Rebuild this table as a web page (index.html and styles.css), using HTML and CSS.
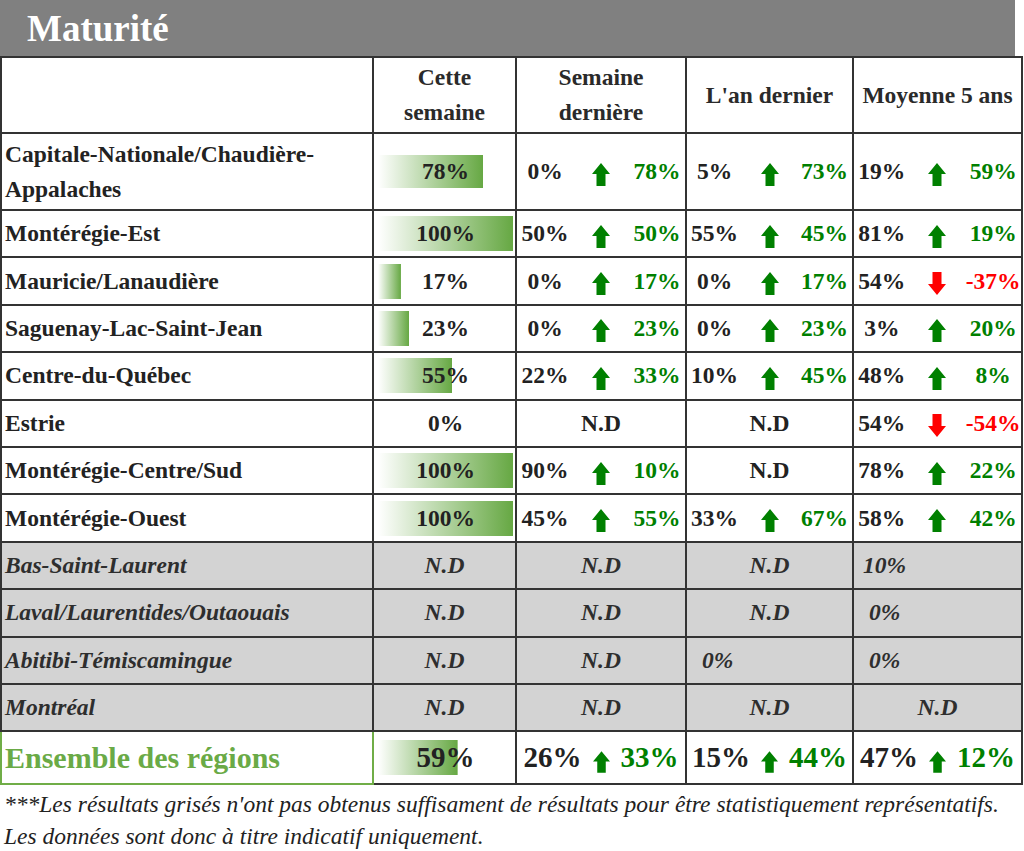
FILE: index.html
```html
<!DOCTYPE html>
<html lang="fr">
<head>
<meta charset="utf-8">
<title>Maturité</title>
<link rel="stylesheet" href="styles.css">
</head>
<body>
<div class="title">Maturité</div>
<table class="grid">
  <colgroup>
    <col class="c-label"><col class="c-week"><col class="c-last"><col class="c-year"><col class="c-avg">
  </colgroup>
  <tr class="head">
    <td></td>
    <td>Cette<br>semaine</td>
    <td>Semaine<br>dernière</td>
    <td>L'an dernier</td>
    <td>Moyenne 5 ans</td>
  </tr>
  <tr class="first">
    <td class="label">Capitale-Nationale/Chaudière-Appalaches</td>
    <td class="barcell"><div class="bar short" style="--w:78%">78%</div></td>
    <td><div class="cmp"><span>0%</span><svg class="arrow up" viewBox="0 0 18 23"><polygon points="9,0 18,11 13.5,11 13.5,23 4.5,23 4.5,11 0,11"/></svg><span class="pos">78%</span></div></td>
    <td><div class="cmp"><span>5%</span><svg class="arrow up" viewBox="0 0 18 23"><polygon points="9,0 18,11 13.5,11 13.5,23 4.5,23 4.5,11 0,11"/></svg><span class="pos">73%</span></div></td>
    <td><div class="cmp"><span>19%</span><svg class="arrow up" viewBox="0 0 18 23"><polygon points="9,0 18,11 13.5,11 13.5,23 4.5,23 4.5,11 0,11"/></svg><span class="pos">59%</span></div></td>
  </tr>
  <tr>
    <td class="label">Montérégie-Est</td>
    <td class="barcell"><div class="bar" style="--w:100%">100%</div></td>
    <td><div class="cmp"><span>50%</span><svg class="arrow up" viewBox="0 0 18 23"><polygon points="9,0 18,11 13.5,11 13.5,23 4.5,23 4.5,11 0,11"/></svg><span class="pos">50%</span></div></td>
    <td><div class="cmp"><span>55%</span><svg class="arrow up" viewBox="0 0 18 23"><polygon points="9,0 18,11 13.5,11 13.5,23 4.5,23 4.5,11 0,11"/></svg><span class="pos">45%</span></div></td>
    <td><div class="cmp"><span>81%</span><svg class="arrow up" viewBox="0 0 18 23"><polygon points="9,0 18,11 13.5,11 13.5,23 4.5,23 4.5,11 0,11"/></svg><span class="pos">19%</span></div></td>
  </tr>
  <tr>
    <td class="label">Mauricie/Lanaudière</td>
    <td class="barcell"><div class="bar" style="--w:17%">17%</div></td>
    <td><div class="cmp"><span>0%</span><svg class="arrow up" viewBox="0 0 18 23"><polygon points="9,0 18,11 13.5,11 13.5,23 4.5,23 4.5,11 0,11"/></svg><span class="pos">17%</span></div></td>
    <td><div class="cmp"><span>0%</span><svg class="arrow up" viewBox="0 0 18 23"><polygon points="9,0 18,11 13.5,11 13.5,23 4.5,23 4.5,11 0,11"/></svg><span class="pos">17%</span></div></td>
    <td><div class="cmp"><span>54%</span><svg class="arrow down" viewBox="0 0 18 23"><polygon points="4.5,0 13.5,0 13.5,12 18,12 9,23 0,12 4.5,12"/></svg><span class="neg">-37%</span></div></td>
  </tr>
  <tr>
    <td class="label">Saguenay-Lac-Saint-Jean</td>
    <td class="barcell"><div class="bar" style="--w:23%">23%</div></td>
    <td><div class="cmp"><span>0%</span><svg class="arrow up" viewBox="0 0 18 23"><polygon points="9,0 18,11 13.5,11 13.5,23 4.5,23 4.5,11 0,11"/></svg><span class="pos">23%</span></div></td>
    <td><div class="cmp"><span>0%</span><svg class="arrow up" viewBox="0 0 18 23"><polygon points="9,0 18,11 13.5,11 13.5,23 4.5,23 4.5,11 0,11"/></svg><span class="pos">23%</span></div></td>
    <td><div class="cmp"><span>3%</span><svg class="arrow up" viewBox="0 0 18 23"><polygon points="9,0 18,11 13.5,11 13.5,23 4.5,23 4.5,11 0,11"/></svg><span class="pos">20%</span></div></td>
  </tr>
  <tr>
    <td class="label">Centre-du-Québec</td>
    <td class="barcell"><div class="bar" style="--w:55%">55%</div></td>
    <td><div class="cmp"><span>22%</span><svg class="arrow up" viewBox="0 0 18 23"><polygon points="9,0 18,11 13.5,11 13.5,23 4.5,23 4.5,11 0,11"/></svg><span class="pos">33%</span></div></td>
    <td><div class="cmp"><span>10%</span><svg class="arrow up" viewBox="0 0 18 23"><polygon points="9,0 18,11 13.5,11 13.5,23 4.5,23 4.5,11 0,11"/></svg><span class="pos">45%</span></div></td>
    <td><div class="cmp"><span>48%</span><svg class="arrow up" viewBox="0 0 18 23"><polygon points="9,0 18,11 13.5,11 13.5,23 4.5,23 4.5,11 0,11"/></svg><span class="pos">8%</span></div></td>
  </tr>
  <tr>
    <td class="label">Estrie</td>
    <td class="barcell"><div class="bar" style="--w:0%">0%</div></td>
    <td class="nd">N.D</td>
    <td class="nd">N.D</td>
    <td><div class="cmp"><span>54%</span><svg class="arrow down" viewBox="0 0 18 23"><polygon points="4.5,0 13.5,0 13.5,12 18,12 9,23 0,12 4.5,12"/></svg><span class="neg">-54%</span></div></td>
  </tr>
  <tr>
    <td class="label">Montérégie-Centre/Sud</td>
    <td class="barcell"><div class="bar" style="--w:100%">100%</div></td>
    <td><div class="cmp"><span>90%</span><svg class="arrow up" viewBox="0 0 18 23"><polygon points="9,0 18,11 13.5,11 13.5,23 4.5,23 4.5,11 0,11"/></svg><span class="pos">10%</span></div></td>
    <td class="nd">N.D</td>
    <td><div class="cmp"><span>78%</span><svg class="arrow up" viewBox="0 0 18 23"><polygon points="9,0 18,11 13.5,11 13.5,23 4.5,23 4.5,11 0,11"/></svg><span class="pos">22%</span></div></td>
  </tr>
  <tr>
    <td class="label">Montérégie-Ouest</td>
    <td class="barcell"><div class="bar" style="--w:100%">100%</div></td>
    <td><div class="cmp"><span>45%</span><svg class="arrow up" viewBox="0 0 18 23"><polygon points="9,0 18,11 13.5,11 13.5,23 4.5,23 4.5,11 0,11"/></svg><span class="pos">55%</span></div></td>
    <td><div class="cmp"><span>33%</span><svg class="arrow up" viewBox="0 0 18 23"><polygon points="9,0 18,11 13.5,11 13.5,23 4.5,23 4.5,11 0,11"/></svg><span class="pos">67%</span></div></td>
    <td><div class="cmp"><span>58%</span><svg class="arrow up" viewBox="0 0 18 23"><polygon points="9,0 18,11 13.5,11 13.5,23 4.5,23 4.5,11 0,11"/></svg><span class="pos">42%</span></div></td>
  </tr>
  <tr class="gray">
    <td class="label">Bas-Saint-Laurent</td>
    <td class="nd">N.D</td>
    <td class="nd">N.D</td>
    <td class="nd">N.D</td>
    <td class="left">10%</td>
  </tr>
  <tr class="gray">
    <td class="label">Laval/Laurentides/Outaouais</td>
    <td class="nd">N.D</td>
    <td class="nd">N.D</td>
    <td class="nd">N.D</td>
    <td class="left">&nbsp;0%</td>
  </tr>
  <tr class="gray">
    <td class="label">Abitibi-Témiscamingue</td>
    <td class="nd">N.D</td>
    <td class="nd">N.D</td>
    <td class="left">&nbsp;0%</td>
    <td class="left">&nbsp;0%</td>
  </tr>
  <tr class="gray">
    <td class="label">Montréal</td>
    <td class="nd">N.D</td>
    <td class="nd">N.D</td>
    <td class="nd">N.D</td>
    <td class="nd">N.D</td>
  </tr>
  <tr class="total">
    <td class="label">Ensemble des régions</td>
    <td class="barcell"><div class="bar" style="--w:59%">59%</div></td>
    <td><div class="cmp tight"><span>26%</span><svg class="arrow up" viewBox="0 0 18 23"><polygon points="9,0 18,11 13.5,11 13.5,23 4.5,23 4.5,11 0,11"/></svg><span class="pos">33%</span></div></td>
    <td><div class="cmp tight"><span>15%</span><svg class="arrow up" viewBox="0 0 18 23"><polygon points="9,0 18,11 13.5,11 13.5,23 4.5,23 4.5,11 0,11"/></svg><span class="pos">44%</span></div></td>
    <td><div class="cmp tight"><span>47%</span><svg class="arrow up" viewBox="0 0 18 23"><polygon points="9,0 18,11 13.5,11 13.5,23 4.5,23 4.5,11 0,11"/></svg><span class="pos">12%</span></div></td>
  </tr>
</table>
<p class="note">***Les résultats grisés n'ont pas obtenus suffisament de résultats pour être statistiquement représentatifs.<br>Les données sont donc à titre indicatif uniquement.</p>
</body>
</html>
```
FILE: styles.css
```css
html, body {
  margin: 0;
  padding: 0;
  background: #ffffff;
}

body {
  font-family: "Liberation Serif", "Times New Roman", serif;
  color: #222222;
  width: 1024px;
}

.title {
  box-sizing: border-box;
  width: 1015px;
  height: 56px;
  background: #808080;
  color: #ffffff;
  font-weight: bold;
  font-size: 37px;
  padding-left: 27px;
  display: flex;
  align-items: center;
}

.grid {
  border-collapse: collapse;
  table-layout: fixed;
  width: 1022px;
  margin-left: 0;
  font-family: "Liberation Serif", "Times New Roman", serif;
}

.c-label { width: 372px; }
.c-week { width: 143px; }
.c-last { width: 170px; }
.c-year { width: 167px; }
.c-avg { width: 169px; }

.grid td {
  border: 2px solid #333333;
  padding: 0;
  font-family: "Liberation Serif", "Times New Roman", serif;
  font-weight: bold;
  font-size: 23.5px;
  line-height: 35px;
  height: 45.4px;
  text-align: center;
  vertical-align: middle;
}

.grid tr.head td {
  height: 74px;
  color: #2a2a2a;
}

.grid tr.first td {
  height: 75px;
}

.grid td.label {
  text-align: left;
  padding-left: 3px;
}

.barcell {
  padding: 0 2px 0 4px !important;
}

.bar {
  height: 35px;
  display: flex;
  align-items: center;
  justify-content: center;
  background-image: linear-gradient(to right, #ffffff, #66a843);
  background-size: var(--w) 100%;
  background-repeat: no-repeat;
}

.bar.short {
  height: 33px;
}

.cmp {
  display: grid;
  grid-template-columns: repeat(3, 1fr);
  align-items: center;
  justify-items: center;
}

.cmp.tight {
  display: flex;
  justify-content: center;
  gap: 11px;
}

.arrow {
  display: block;
  width: 18px;
  height: 23px;
  margin-top: 5px;
}

.arrow.up { fill: #008000; }
.arrow.down { fill: #ff0000; }

.pos { color: #008000; }
.neg { color: #ff0000; }

.grid tr.gray td {
  background: #d3d3d3;
  font-style: italic;
  color: #2e2e2e;
}

.grid tr.gray td.left {
  text-align: left;
  padding-left: 9px;
}

.grid tr.total td {
  height: 51px;
  font-size: 29px;
}

.grid tr.total td.label {
  border: 2px solid #70ad47;
  color: #6aaa46;
  font-size: 30px;
}

.grid tr.total .arrow {
  width: 17px;
  height: 22px;
  margin-top: 8px;
}

.note {
  margin: 0;
  padding: 3px 0 0 4px;
  font-family: "Liberation Serif", "Times New Roman", serif;
  font-style: italic;
  font-size: 23.5px;
  line-height: 32px;
  color: #222222;
}
```
